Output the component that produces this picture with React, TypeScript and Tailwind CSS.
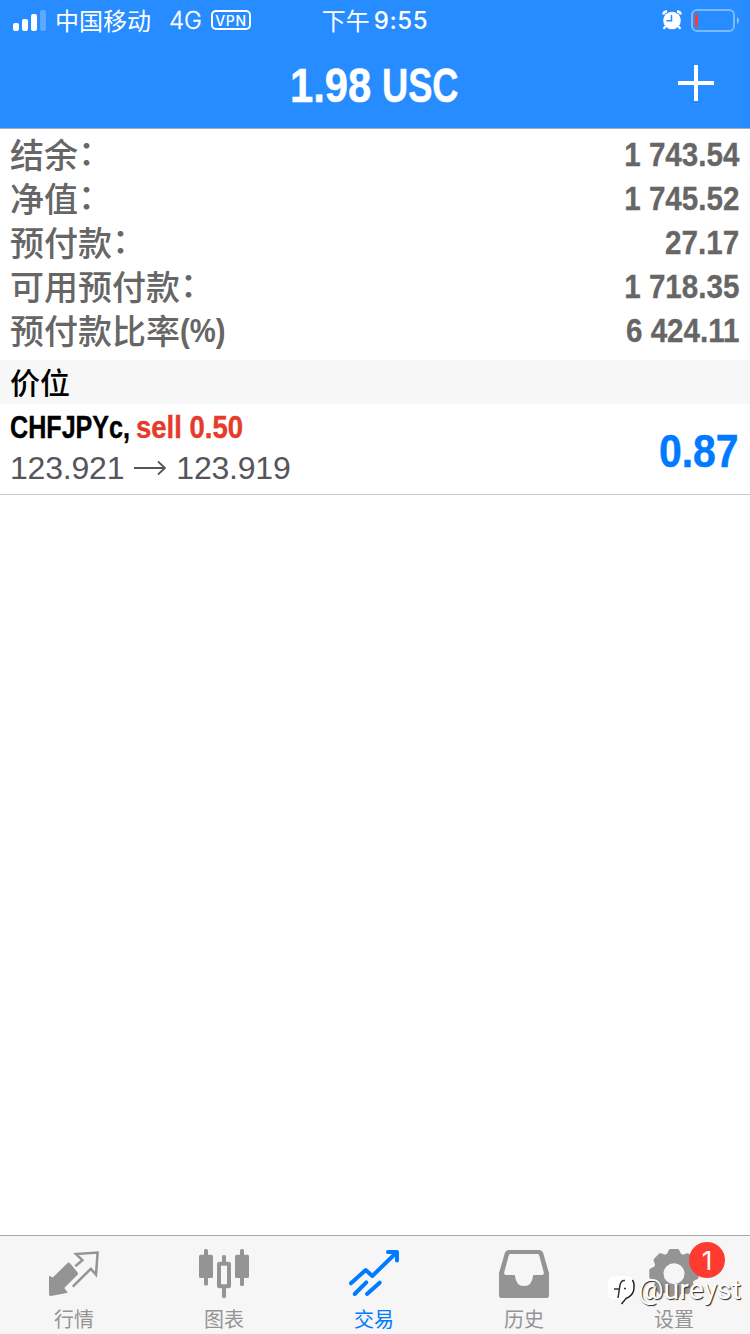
import type { ReactNode } from 'react';

interface Metric {
  label: string;
  suffix: ReactNode;
  value: string;
}

interface Tab {
  name: string;
  icon: ReactNode;
  active?: boolean;
  badge?: number;
}

const colon = <span className="relative -top-[3px]">：</span>;

const metrics: Metric[] = [
  { label: '结余', suffix: colon, value: '1 743.54' },
  { label: '净值', suffix: colon, value: '1 745.52' },
  { label: '预付款', suffix: colon, value: '27.17' },
  { label: '可用预付款', suffix: colon, value: '1 718.35' },
  {
    label: '预付款比率',
    suffix: <span className="relative -top-0.5 inline-block origin-left scale-x-[0.86] font-bold">(%)</span>,
    value: '6 424.11',
  },
];

const QuotesIcon = () => (
  <svg width="50" height="50" viewBox="0 0 50 50" fill="none" className="overflow-visible">
    <path
      d="M0 27.7 L3.8 29.4 L18.4 15.2 Q19.7 14 21 15.2 L28.6 24.4 Q29.6 25.6 28.5 26.8 L15.3 40 L18.9 44.8 L2 48 Q0 48.3 0 46 Z"
      fill="currentColor"
    />
    <path d="M26.3 18.3 L33.4 12.2 L27 6.1 L48.6 4.6 L47 26.6 L41.8 20.8 L23.8 38.6" stroke="currentColor" strokeWidth="2.5" />
  </svg>
);

const ChartIcon = () => (
  <svg width="50" height="50" viewBox="0 0 50 50" fill="currentColor">
    <rect x="0" y="6.7" width="14" height="23.3" rx="1.5" />
    <rect x="5" y="1" width="4" height="36.5" rx="1.6" />
    <rect x="36" y="6.7" width="14" height="23.3" rx="1.5" />
    <rect x="41" y="1" width="4" height="37" rx="1.6" />
    <rect x="20" y="15.7" width="10" height="22.6" rx="0.5" fill="none" stroke="currentColor" strokeWidth="4" />
    <rect x="23" y="7" width="4" height="9" rx="1.6" />
    <rect x="23" y="39" width="4" height="11" rx="1.6" />
  </svg>
);

const TradeIcon = () => (
  <svg width="50" height="50" viewBox="0 0 50 50" fill="none" stroke="currentColor" strokeWidth="4" strokeLinecap="round" strokeLinejoin="round">
    <path d="M2 35.3 L16.7 22 L23.3 28 L47.5 4.5" />
    <path d="M39 4 H48 V12.5" />
    <path d="M17.3 34.3 L5.7 46 M30.7 34.7 L18 46" />
  </svg>
);

const HistoryIcon = () => (
  <svg width="50" height="50" viewBox="0 0 50 50" fill="currentColor">
    <path
      fillRule="evenodd"
      d="M0 25 L6 4.5 Q7 2 9.5 2 H40.5 Q43 2 44 4.5 L50 25 V47.5 Q50 50 47.5 50 H2.5 Q0 50 0 47.5 Z M11.5 6 Q10.3 6 9.8 7.2 L5.2 24.5 Q4.8 27 7 27 H15 Q16 27 16 28 Q17 38 25 38 Q33 38 34 28 Q34 27 35 27 H43 Q45.2 27 44.8 24.5 L40.2 7.2 Q39.7 6 38.5 6 Z"
    />
  </svg>
);

const SettingsIcon = () => (
  <svg width="50" height="50" viewBox="0 0 50 50" fill="none">
    <circle cx="25" cy="25.7" r="15.7" stroke="currentColor" strokeWidth="10.4" />
    {[0, 45, 90, 135, 180, 225, 270, 315].map((angle) => (
      <path key={angle} d="M17 8 L19.8 2 Q20.3 1 21.6 1 H28.4 Q29.7 1 30.2 2 L33 8 Z" fill="currentColor" transform={`rotate(${angle} 25 25.7)`} />
    ))}
  </svg>
);

const tabs: Tab[] = [
  { name: '行情', icon: <QuotesIcon /> },
  { name: '图表', icon: <ChartIcon /> },
  { name: '交易', icon: <TradeIcon />, active: true },
  { name: '历史', icon: <HistoryIcon /> },
  { name: '设置', icon: <SettingsIcon />, badge: 1 },
];

const StatusBar = () => (
  <div className="flex h-10 items-center text-white">
    <div className="flex flex-1 items-center pl-[13px]">
      <div className="flex h-[21px] items-end gap-[3px]">
        <span className="h-2 w-1.5 rounded-[2px] bg-white" />
        <span className="h-3 w-1.5 rounded-[2px] bg-white" />
        <span className="h-[17px] w-1.5 rounded-[2px] bg-white" />
        <span className="h-[21px] w-1.5 rounded-[2px] bg-white/25" />
      </div>
      <span className="ml-[9px] pt-[3px] text-2xl">中国移动</span>
      <span className="ml-[18px] pt-0.5 font-['Inter',sans-serif] text-2xl font-light [-webkit-text-stroke:0.3px]">4G</span>
      <span className="ml-[9px] flex h-5 w-10 items-center justify-center rounded-[5px] border-2 border-white font-['Inter',sans-serif] text-[14px] font-medium tracking-[0.6px]">
        VPN
      </span>
    </div>
    <div className="flex items-center pr-0.5">
      <span className="pt-[3px] text-2xl">下午</span>
      <span className="ml-1 pt-0.5 font-['Inter',sans-serif] text-2xl font-medium tracking-[0.6px]">9:55</span>
    </div>
    <div className="flex flex-1 items-center justify-end pr-[11px]">
      <svg width="20" height="20" viewBox="0 0 20 20" fill="none">
        <path d="M1.5 4.5 Q1.5 1.5 5 1.5 M18.5 4.5 Q18.5 1.5 15 1.5" stroke="white" strokeWidth="2.6" />
        <path d="M4 16 L1.5 18.7 M16 16 L18.5 18.7" stroke="white" strokeWidth="2" />
        <circle cx="10" cy="10.5" r="8.8" fill="white" />
        <path d="M9.5 5 V10.7 H4.5" stroke="#268cff" strokeWidth="1.5" />
      </svg>
      <svg width="48" height="23" viewBox="0 0 48 23" fill="none" className="ml-[9px]">
        <rect x="1" y="1" width="42" height="21" rx="5" stroke="white" strokeOpacity="0.4" strokeWidth="2" />
        <rect x="4" y="5" width="3" height="13" rx="1" fill="#ff3b30" />
        <path d="M46 8 Q48 9 48 11.5 Q48 14 46 15 Z" fill="white" fillOpacity="0.5" />
      </svg>
    </div>
  </div>
);

const Watermark = () => (
  <div className="absolute top-[38px] left-[608px] flex items-center">
    <svg width="28" height="32" viewBox="0 0 28 32" fill="none" className="shrink-0">
      <path d="M8 2 H18 Q26 2 26 10 V16 Q26 24 14 30 V26 H8 Q0 26 0 18 V10 Q0 2 8 2 Z" fill="white" />
      <path d="M17 6.5 Q13 6 12 11 L10 24 M6 15 H12 M16 14.5 H18" stroke="#333" strokeWidth="1.5" />
      <path d="M24.5 6 Q27 10 25.5 17 Q24 22 18 24.5 L13.5 30" stroke="#222" strokeWidth="1.5" />
    </svg>
    <span className="ml-0.5 font-['Roboto',sans-serif] text-[28.5px] leading-8 text-white [text-shadow:1px_1px_1px_#222]">@ureyst</span>
  </div>
);

export default function App() {
  return (
    <div className="flex h-[1334px] w-[750px] flex-col overflow-hidden bg-white font-['Liberation_Sans','Noto_Sans_CJK_SC',sans-serif]">
      <header className="h-[129px] border-b border-[#a9adb3] bg-[#268cff]">
        <StatusBar />
        <div className="grid h-[88px] grid-cols-3 items-center">
          <h1 className="col-start-2 mx-auto flex w-[170px] justify-between pt-[3px] text-[48px] font-bold whitespace-nowrap text-white [-webkit-text-stroke:0.5px]">
            <span className="w-[82px]">
              <span className="inline-block origin-left scale-x-[0.87]">1.98</span>
            </span>
            <span className="w-[78px]">
              <span className="inline-block origin-left scale-x-[0.755]">USC</span>
            </span>
          </h1>
          <button className="mr-9 -mt-0.5 justify-self-end" aria-label="New order">
            <svg width="36" height="36" viewBox="0 0 36 36" stroke="white" strokeWidth="4">
              <path d="M18 0 V36 M0 18 H36" />
            </svg>
          </button>
        </div>
      </header>

      <section className="h-[231px] pt-[3px] pr-[11px] pl-2.5">
        {metrics.map((metric) => (
          <div key={metric.label} className="flex h-11 items-center justify-between text-[34px] leading-[44px] text-[#666]">
            <span className="pt-[3px] font-medium">
              {metric.label}
              {metric.suffix}
            </span>
            <span className="inline-block origin-right scale-x-[0.87] font-bold [-webkit-text-stroke:0.3px]">{metric.value}</span>
          </div>
        ))}
      </section>

      <h2 className="flex h-11 items-center bg-[#f7f7f7] px-2.5 pt-0.5 text-[30px] font-medium text-black">价位</h2>

      <div className="flex h-[91px] items-center justify-between border-b border-[#c8c7cc] pr-3 pl-2.5">
        <div className="-mt-[3px] flex flex-col">
          <div className="flex h-[41px] text-[32px] leading-[41px] font-bold whitespace-nowrap [-webkit-text-stroke:0.4px]">
            <span className="w-[126px]">
              <span className="inline-block origin-left scale-x-[0.785]">CHFJPYc,</span>
            </span>
            <span className="inline-block origin-left scale-x-[0.86] text-[#e63b2b]">sell 0.50</span>
          </div>
          <div className="flex h-[41px] items-center text-[32px] tracking-[-0.2px] text-[#55555c]">
            <span>123.921</span>
            <svg width="32" height="16" viewBox="0 0 32 16" fill="none" stroke="currentColor" strokeWidth="1.8" className="mx-2.5">
              <path d="M0 8 H31 M24 1.5 L31 8 L24 14.5" />
            </svg>
            <span>123.919</span>
          </div>
        </div>
        <span className="inline-block origin-right scale-x-[0.87] pt-1 text-[47px] font-bold text-[#007aff] [-webkit-text-stroke:0.5px]">0.87</span>
      </div>

      <main className="flex-1" />

      <nav className="relative flex h-[99px] border-t border-[#a9a9a9] bg-[#f6f6f6]">
        {tabs.map((tab) => (
          <button key={tab.name} className={`flex w-[150px] flex-col items-center pt-3 pr-0.5 ${tab.active ? 'text-[#007aff]' : 'text-[#949494]'}`}>
            <span className="relative">
              {tab.icon}
              {tab.badge && (
                <span className="absolute -top-1.5 left-10 flex size-9 items-center justify-center rounded-full bg-[#ff3b30] font-['Inter',sans-serif] text-[26px] text-white">
                  {tab.badge}
                </span>
              )}
            </span>
            <span className="mt-2 text-xl leading-[28px]">{tab.name}</span>
          </button>
        ))}
        <Watermark />
      </nav>
    </div>
  );
}
